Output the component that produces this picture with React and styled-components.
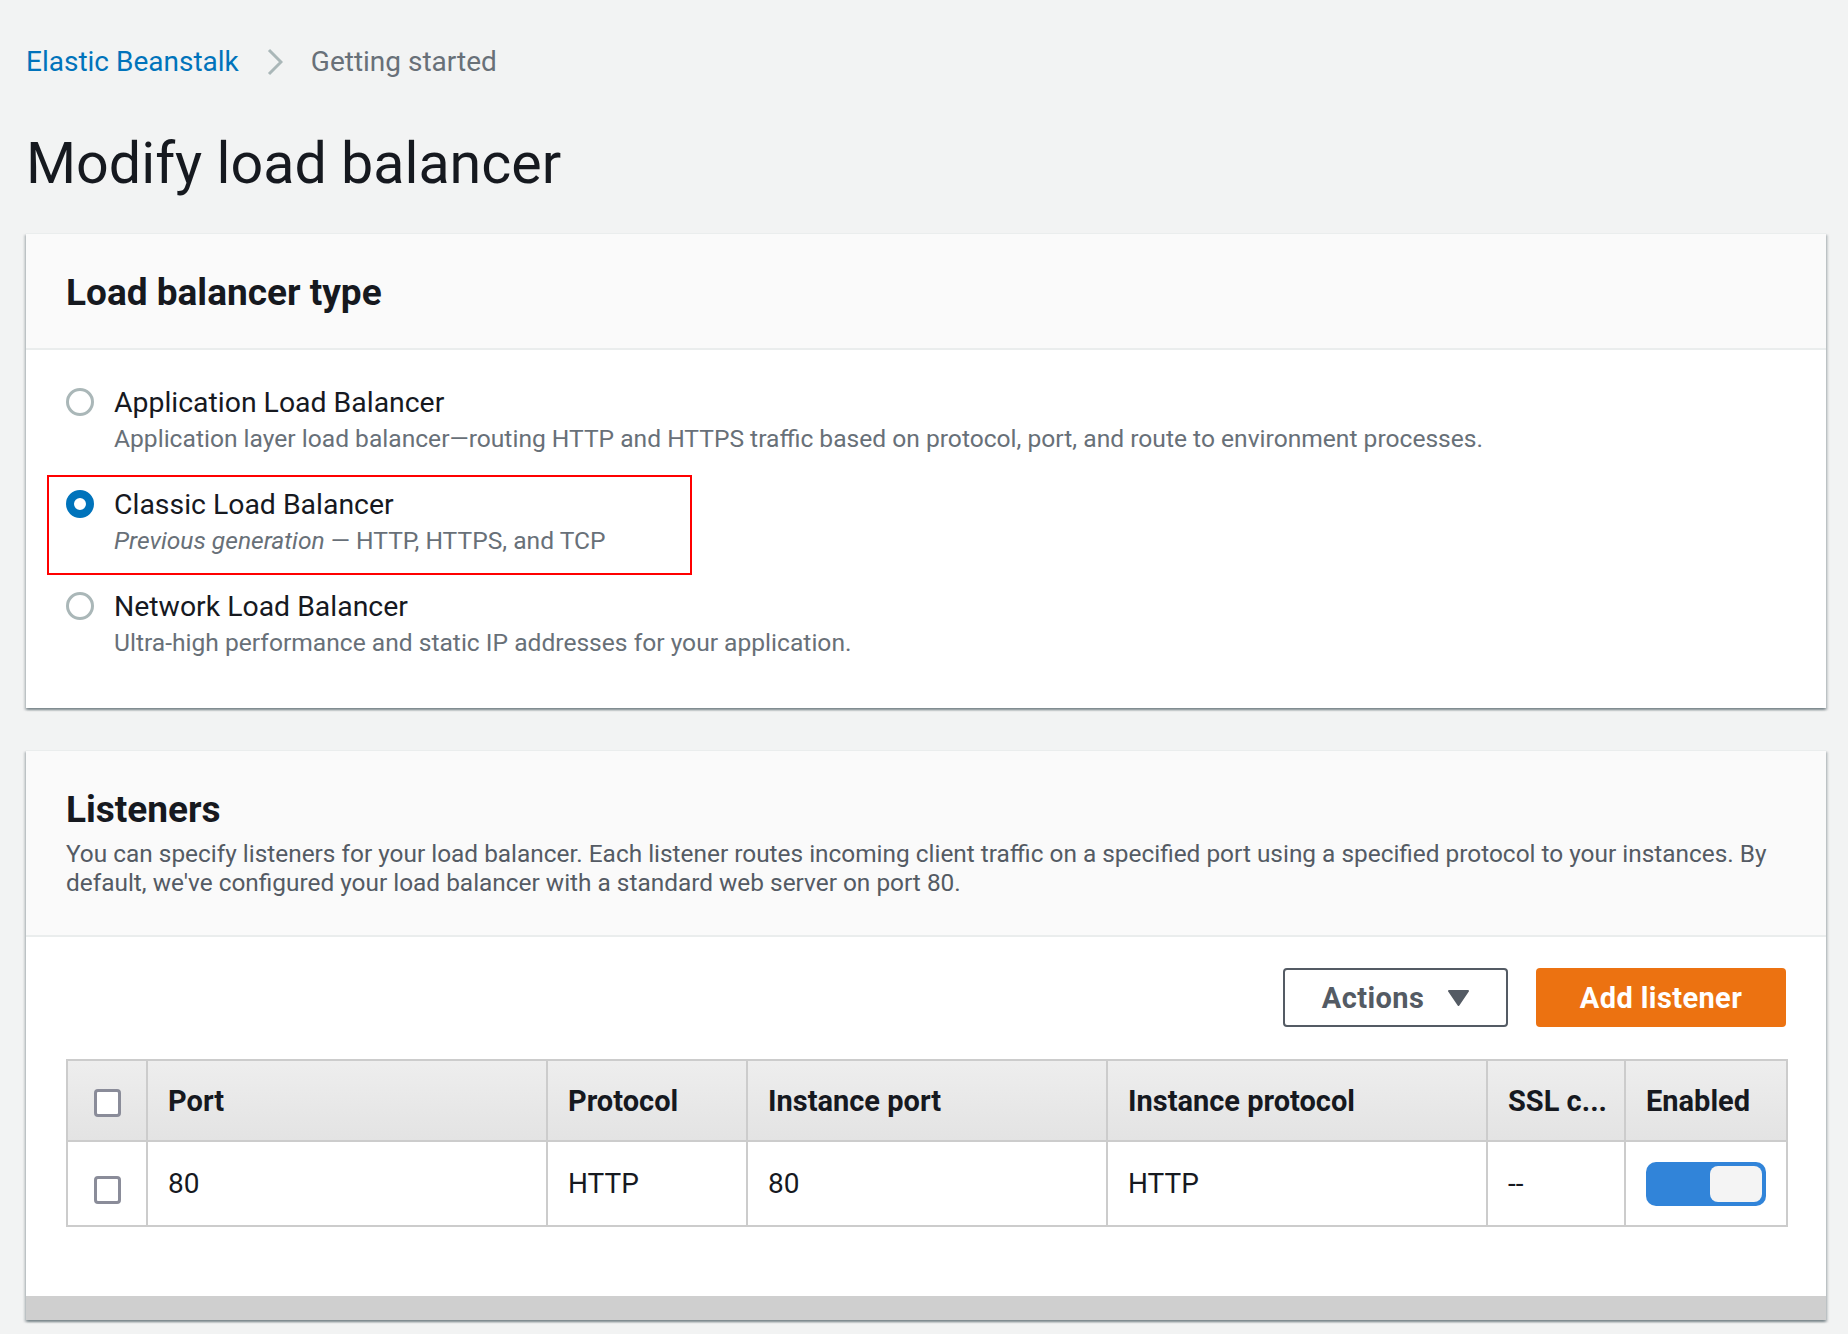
import React from "react";
import styled, { createGlobalStyle } from "styled-components";

const GlobalStyle = createGlobalStyle`
  body {
    margin: 0;
    background: #f2f3f3;
    font-family: Roboto, "Liberation Sans", sans-serif;
    color: #16191f;
  }
`;

const Page = styled.div`
  padding: 42px 22px 14px 26px;
`;

const Breadcrumbs = styled.nav`
  display: flex;
  align-items: center;
  gap: 28px;
  height: 40px;
  font-size: 28px;
  line-height: 40px;
`;

const Crumb = styled.a`
  color: ${(p) => (p.$current ? "#687078" : "#0073bb")};
  text-decoration: none;
`;

const Title = styled.h1`
  margin: 46px 0 33px;
  font-size: 57.4px;
  line-height: 72px;
  font-weight: 400;
  color: #16191f;
`;

const Card = styled.section`
  background: #fff;
  margin-bottom: 42px;
  box-shadow: 0 2px 2px 0 rgba(0, 28, 36, 0.3), 2px 2px 2px 0 rgba(0, 28, 36, 0.15),
    -2px 2px 2px 0 rgba(0, 28, 36, 0.15);
  border-top: 1px solid #eaeded;
`;

const CardHeader = styled.header`
  background: #fafafa;
  padding: 37px 40px ${(p) => p.$bottom || 33}px;
  border-bottom: 2px solid #eaeded;
`;

const CardTitle = styled.h2`
  margin: 0;
  font-size: 37px;
  line-height: 44px;
  font-weight: 700;
  color: #16191f;
`;

const CardDescription = styled.p`
  margin: 7px 0 0;
  font-size: 24.4px;
  line-height: 29px;
  color: #545b64;
`;

const CardBody = styled.div`
  padding: ${(p) => p.$padding};
`;

const RadioList = styled.div`
  display: flex;
  flex-direction: column;
  gap: 30px;
`;

const RadioItem = styled.label`
  position: relative;
  display: flex;
  align-items: flex-start;
  gap: 20px;
`;

const RadioCircle = styled.span`
  flex: none;
  box-sizing: border-box;
  width: 28px;
  height: 28px;
  margin-top: 5px;
  border-radius: 50%;
  background: #fff;
  border: ${(p) => (p.$checked ? "8px solid #0073bb" : "3px solid #aab7b8")};
`;

const RadioText = styled.div`
  display: flex;
  flex-direction: column;
`;

const RadioLabel = styled.span`
  font-size: 28.4px;
  line-height: 40px;
  color: #16191f;
`;

const RadioDescription = styled.span`
  font-size: 24.6px;
  line-height: 32px;
  color: #687078;
`;

const Highlight = styled.span`
  position: absolute;
  top: -10px;
  left: -19px;
  width: 645px;
  height: 100px;
  box-sizing: border-box;
  border: 2px solid #ff0000;
  pointer-events: none;
`;

const Toolbar = styled.div`
  display: flex;
  justify-content: flex-end;
  gap: 28px;
  margin-bottom: 32px;
`;

const Button = styled.button`
  display: flex;
  align-items: center;
  justify-content: center;
  gap: 24px;
  box-sizing: border-box;
  width: ${(p) => p.$width}px;
  height: 59px;
  border-radius: 4px;
  font-family: inherit;
  font-size: 29px;
  letter-spacing: 0.4px;
  font-weight: 700;
  cursor: pointer;
  border: ${(p) => (p.$primary ? "none" : "2px solid #545b64")};
  background: ${(p) => (p.$primary ? "#ec7211" : "#fff")};
  color: ${(p) => (p.$primary ? "#fff" : "#545b64")};
`;

const Table = styled.table`
  width: 100%;
  table-layout: fixed;
  border-collapse: collapse;
  border: 2px solid #cccccc;
  font-size: 28px;
`;

const HeadRow = styled.tr`
  height: 81px;
  background: linear-gradient(#eeeeee, #e3e3e3);
`;

const BodyRow = styled.tr`
  height: 85px;
  background: #fff;
`;

const Th = styled.th`
  padding: 0 20px;
  border: 2px solid #cccccc;
  text-align: ${(p) => (p.$center ? "center" : "left")};
  font-size: 29px;
  font-weight: 700;
  color: #16191f;
  white-space: nowrap;
`;

const Td = styled.td`
  padding: 0 20px;
  border: 2px solid #cccccc;
  text-align: ${(p) => (p.$center ? "center" : "left")};
  color: #16191f;
`;

const Checkbox = styled.span`
  display: inline-block;
  vertical-align: middle;
  box-sizing: border-box;
  width: 27px;
  height: 28px;
  margin-top: ${(p) => p.$offset || 0}px;
  border: 3px solid #8a8c99;
  border-radius: 4px;
  background: #fff;
`;

const Toggle = styled.span`
  display: flex;
  justify-content: flex-end;
  box-sizing: border-box;
  width: 120px;
  height: 44px;
  padding: 4px;
  border-radius: 10px;
  background: #3184d9;
`;

const ToggleKnob = styled.span`
  width: 52px;
  height: 36px;
  border-radius: 8px;
  background: #f4f4f4;
`;

const FooterBar = styled.div`
  height: 24px;
  background: #cfcfcf;
`;

const Chevron = () => (
  <svg width="16" height="28" viewBox="0 0 16 28">
    <polyline points="2,2 14,14 2,26" fill="none" stroke="#aab7b8" strokeWidth="3" />
  </svg>
);

const Caret = () => (
  <svg width="21" height="16" viewBox="0 0 21 16">
    <polygon points="1,1 20,1 10.5,15" fill="#545b64" stroke="#545b64" strokeWidth="2" strokeLinejoin="round" />
  </svg>
);

const balancers = [
  {
    label: "Application Load Balancer",
    description:
      "Application layer load balancer—routing HTTP and HTTPS traffic based on protocol, port, and route to environment processes.",
  },
  {
    label: "Classic Load Balancer",
    description: (
      <>
        <em>Previous generation</em> — HTTP, HTTPS, and TCP
      </>
    ),
    checked: true,
  },
  {
    label: "Network Load Balancer",
    description: "Ultra-high performance and static IP addresses for your application.",
  },
];

const columns = [
  { width: 80 },
  { width: 400, title: "Port" },
  { width: 200, title: "Protocol" },
  { width: 360, title: "Instance port" },
  { width: 380, title: "Instance protocol" },
  { width: 138, title: "SSL c..." },
  { width: 162, title: "Enabled" },
];

const App = () => {
  return (
    <Page>
      <GlobalStyle />
      <Breadcrumbs>
        <Crumb href="#">Elastic Beanstalk</Crumb>
        <Chevron />
        <Crumb $current>Getting started</Crumb>
      </Breadcrumbs>
      <Title>Modify load balancer</Title>

      <Card>
        <CardHeader>
          <CardTitle>Load balancer type</CardTitle>
        </CardHeader>
        <CardBody $padding="33px 40px 49px">
          <RadioList>
            {balancers.map((b) => (
              <RadioItem key={b.label}>
                <RadioCircle $checked={b.checked} />
                <RadioText>
                  <RadioLabel>{b.label}</RadioLabel>
                  <RadioDescription>{b.description}</RadioDescription>
                </RadioText>
                {b.checked && <Highlight />}
              </RadioItem>
            ))}
          </RadioList>
        </CardBody>
      </Card>

      <Card>
        <CardHeader $bottom={38}>
          <CardTitle>Listeners</CardTitle>
          <CardDescription>
            You can specify listeners for your load balancer. Each listener routes incoming client
            traffic on a specified port using a specified protocol to your instances. By default,
            we've configured your load balancer with a standard web server on port 80.
          </CardDescription>
        </CardHeader>
        <CardBody $padding="31px 40px 69px">
          <Toolbar>
            <Button $width={225}>
              Actions
              <Caret />
            </Button>
            <Button $primary $width={250}>
              Add listener
            </Button>
          </Toolbar>
          <Table>
            <colgroup>
              {columns.map((c, i) => (
                <col key={i} style={{ width: c.width }} />
              ))}
            </colgroup>
            <thead>
              <HeadRow>
                <Th $center>
                  <Checkbox />
                </Th>
                {columns.slice(1).map((c) => (
                  <Th key={c.title}>{c.title}</Th>
                ))}
              </HeadRow>
            </thead>
            <tbody>
              <BodyRow>
                <Td $center>
                  <Checkbox $offset={12} />
                </Td>
                <Td>80</Td>
                <Td>HTTP</Td>
                <Td>80</Td>
                <Td>HTTP</Td>
                <Td>--</Td>
                <Td>
                  <Toggle>
                    <ToggleKnob />
                  </Toggle>
                </Td>
              </BodyRow>
            </tbody>
          </Table>
        </CardBody>
        <FooterBar />
      </Card>
    </Page>
  );
};

export default App;
